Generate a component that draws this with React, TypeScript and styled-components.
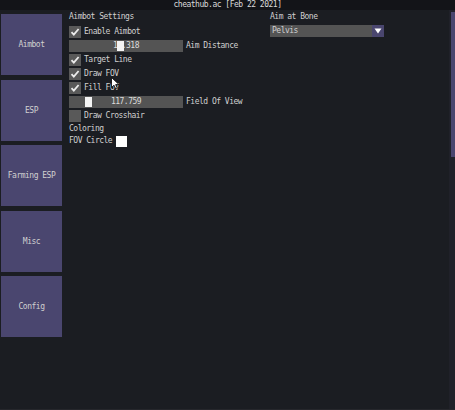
import styled, { createGlobalStyle } from "styled-components";

const GlobalStyle = createGlobalStyle`
    html, body {
        margin: 0;
        padding: 0;
        background-color: #1b1d22;
        overflow: hidden;
    }
`;

const Window = styled.div`
    position: relative;
    width: 455px;
    height: 410px;
    background-color: #1b1d22;
    font-family: "DejaVu Sans Mono", "Liberation Mono", monospace;
    font-size: 8px;
    letter-spacing: -0.5px;
    color: #d0d0d0;
    display: flex;
    flex-direction: column;
    box-sizing: border-box;
    border-bottom: 1px solid #26272c;
`;

const TitleBar = styled.div`
    height: 10px;
    line-height: 10px;
    text-align: center;
    background-color: #131418;
    color: #dadada;
    white-space: pre;
`;

const Body = styled.div`
    flex: 1;
    display: flex;
    flex-direction: row;
`;

const Main = styled.div`
    flex: 1;
    display: flex;
    flex-direction: row;
    padding-top: 2px;
    padding-left: 1px;
`;

const Sidebar = styled.div`
    display: flex;
    flex-direction: column;
    gap: 4.5px;
    margin-top: 2px;
`;

const TabButton = styled.div`
    width: 61px;
    height: 61px;
    background-color: #4a466f;
    color: #d0d0d0;
    display: flex;
    align-items: center;
    justify-content: center;
`;

const Settings = styled.div`
    display: grid;
    grid-template-columns: 201px auto;
    margin-left: 7px;
    align-items: start;
`;

const Column = styled.div`
    display: flex;
    flex-direction: column;
    gap: 2px;
`;

const TextRow = styled.div<{ $after?: number }>`
    height: 9px;
    line-height: 9px;
    white-space: pre;
    margin-bottom: ${(p) => p.$after ?? 0}px;
`;

const Row = styled.div`
    height: 12px;
    display: flex;
    align-items: center;
    gap: 3px;
    white-space: pre;
`;

const Box = styled.div`
    width: 12px;
    height: 12px;
    background-color: #595959;
    display: flex;
    align-items: center;
    justify-content: center;
`;

const Label = styled.span`
    line-height: 12px;
`;

const SliderFrame = styled.div`
    position: relative;
    width: 114px;
    height: 12px;
    background-color: #545454;
    display: flex;
    align-items: center;
    justify-content: center;
`;

const SliderValue = styled.span`
    line-height: 12px;
    color: #dcdcdc;
`;

const SliderGrab = styled.div`
    position: absolute;
    top: 1px;
    width: 7px;
    height: 10px;
    background-color: #f4f4f4;
`;

const Swatch = styled.div`
    width: 11px;
    height: 11px;
    background-color: #ffffff;
    margin-left: 1px;
`;

const Combo = styled.div`
    width: 114px;
    height: 12px;
    background-color: #545454;
    display: flex;
    align-items: center;
    justify-content: space-between;
`;

const ComboText = styled.span`
    padding-left: 2px;
    line-height: 12px;
`;

const ComboArrow = styled.div`
    width: 12px;
    height: 12px;
    background-color: #4a466f;
    display: flex;
    align-items: center;
    justify-content: center;
`;

const ScrollTrack = styled.div`
    width: 6px;
    background-color: #202129;
    display: flex;
    flex-direction: column;
    padding-top: 2px;
    box-sizing: border-box;
`;

const ScrollGrab = styled.div`
    height: 145px;
    margin-left: 2px;
    background-color: #4a466f;
`;

const Cursor = styled.svg`
    position: absolute;
    left: 111px;
    top: 77px;
`;

function Checkbox({ checked, label }: { checked: boolean; label: string }) {
    return (
        <Row>
            <Box>
                {checked && (
                    <svg width="10" height="10" viewBox="0 0 10 10">
                        <polyline points="1.5,5.2 3.8,7.6 8.6,2" fill="none" stroke="#ececec" strokeWidth="1.8" />
                    </svg>
                )}
            </Box>
            <Label>{label}</Label>
        </Row>
    );
}

function Slider({ value, min, max, text, label }: { value: number; min: number; max: number; text: string; label: string }) {
    const frac = (value - min) / (max - min);
    const left = 1 + frac * (114 - 2 - 7);
    return (
        <Row>
            <SliderFrame>
                <SliderValue>{text}</SliderValue>
                <SliderGrab style={{ left }} />
            </SliderFrame>
            <Label>{label}</Label>
        </Row>
    );
}

const tabs = ["Aimbot", "ESP", "Farming ESP", "Misc", "Config"];

export default function App() {
    return (
        <>
            <GlobalStyle />
            <Window>
                <TitleBar>cheathub.ac [Feb 22 2021]</TitleBar>
                <Body>
                    <Main>
                        <Sidebar>
                            {tabs.map((t) => (
                                <TabButton key={t}>{t}</TabButton>
                            ))}
                        </Sidebar>
                        <Settings>
                            <Column>
                                <TextRow $after={3}>Aimbot Settings</TextRow>
                                <Checkbox checked label="Enable Aimbot" />
                                <Slider value={14.318} min={0} max={32} text="14.318" label="Aim Distance" />
                                <Checkbox checked label="Target Line" />
                                <Checkbox checked label="Draw FOV" />
                                <Checkbox checked label="Fill FOV" />
                                <Slider value={117.759} min={60} max={460} text="117.759" label="Field Of View" />
                                <Checkbox checked={false} label="Draw Crosshair" />
                                <TextRow>Coloring</TextRow>
                                <Row>
                                    <Label>FOV Circle</Label>
                                    <Swatch />
                                </Row>
                            </Column>
                            <Column>
                                <TextRow $after={2}>Aim at Bone</TextRow>
                                <Combo>
                                    <ComboText>Pelvis</ComboText>
                                    <ComboArrow>
                                        <svg width="8" height="6" viewBox="0 0 8 6">
                                            <polygon points="0.5,0.5 7.5,0.5 4,5.5" fill="#ffffff" />
                                        </svg>
                                    </ComboArrow>
                                </Combo>
                            </Column>
                        </Settings>
                    </Main>
                    <ScrollTrack>
                        <ScrollGrab />
                    </ScrollTrack>
                </Body>
                <Cursor width="9" height="13" viewBox="0 0 9 13">
                    <polygon points="0.5,0.5 0.5,10.5 3,8.2 4.8,12 6.3,11.3 4.6,7.6 8,7.6" fill="#ffffff" stroke="#000000" strokeWidth="0.8" />
                </Cursor>
            </Window>
        </>
    );
}
